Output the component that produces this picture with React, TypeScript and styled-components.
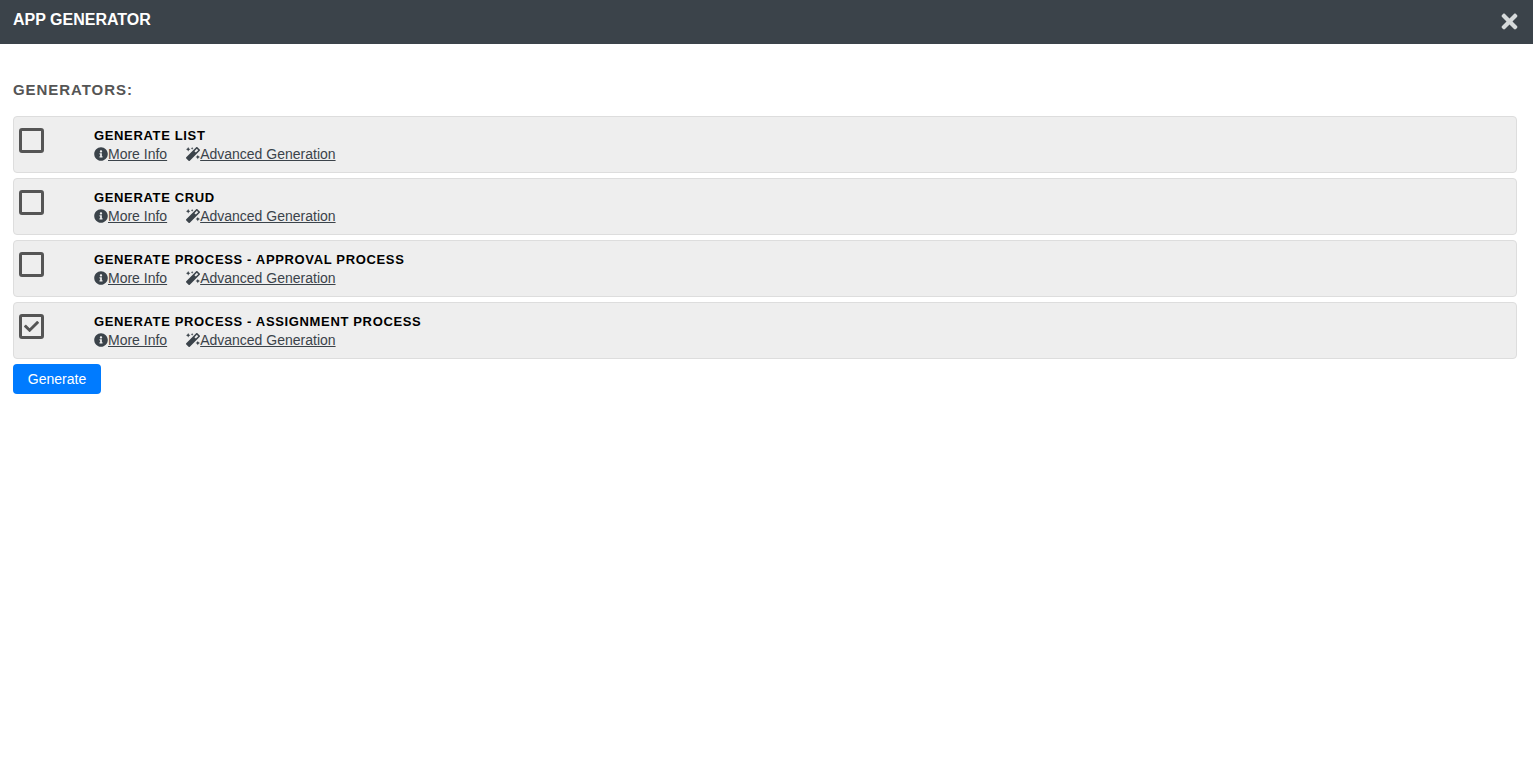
import React from 'react';
import styled, { createGlobalStyle } from 'styled-components';
import { FaCheck, FaInfoCircle, FaMagic, FaTimes } from 'react-icons/fa';

const GlobalStyle = createGlobalStyle`
  html, body {
    margin: 0;
    padding: 0;
    background: #fff;
    font-family: "Liberation Sans", Arial, sans-serif;
  }
`;

const Page = styled.div`
  min-height: 781px;
  display: flex;
  flex-direction: column;
`;

const Header = styled.header`
  height: 44px;
  background: #3b434a;
  display: flex;
  justify-content: space-between;
  padding: 0 12px 0 13px;
`;

const HeaderTitle = styled.div`
  color: #fff;
  font-size: 16px;
  font-weight: bold;
  line-height: 39px;
`;

const CloseBtn = styled.button`
  border: none;
  background: transparent;
  padding: 0;
  margin: 0;
  color: #d6dadb;
  font-size: 23px;
  display: flex;
  align-items: center;
  height: 43px;
  cursor: pointer;
`;

const Content = styled.main`
  padding: 37px 16px 0 13px;
`;

const SectionTitle = styled.h2`
  margin: 0 0 17px;
  color: #555;
  font-size: 15px;
  font-weight: bold;
  letter-spacing: 0.95px;
  line-height: 18px;
`;

const List = styled.div`
  display: flex;
  flex-direction: column;
  gap: 5px;
`;

const Row = styled.div`
  height: 57px;
  box-sizing: border-box;
  background: #eee;
  border: 1px solid #ddd;
  border-radius: 4px;
  display: flex;
  padding: 11px 5px 0;
`;

const CheckBox = styled.span`
  width: 25px;
  height: 25px;
  box-sizing: border-box;
  border: 3px solid #555;
  border-radius: 3px;
  color: #555;
  font-size: 15px;
  display: flex;
  align-items: center;
  justify-content: center;
  flex-shrink: 0;
`;

const RowBody = styled.div`
  margin-left: 50px;
  padding-top: 1px;
`;

const RowTitle = styled.div`
  color: #000;
  font-size: 13px;
  font-weight: bold;
  letter-spacing: 0.65px;
  line-height: 14px;
`;

const Links = styled.div`
  display: flex;
  gap: 19px;
  margin-top: 2px;
`;

const InfoLink = styled.a`
  display: flex;
  align-items: center;
  color: #3b434a;
  font-size: 14px;
  line-height: 18px;
  cursor: pointer;

  svg {
    font-size: 14px;
    flex-shrink: 0;
  }

  span {
    text-decoration: underline;
  }
`;

const GenerateBtn = styled.button`
  margin-top: 5px;
  width: 88px;
  height: 30px;
  border: none;
  border-radius: 4px;
  background: #007bff;
  color: #fff;
  font-family: inherit;
  font-size: 14px;
  padding: 0;
  cursor: pointer;
`;

const generators = [
  { title: 'GENERATE LIST', checked: false },
  { title: 'GENERATE CRUD', checked: false },
  { title: 'GENERATE PROCESS - APPROVAL PROCESS', checked: false },
  { title: 'GENERATE PROCESS - ASSIGNMENT PROCESS', checked: true },
];

const App = () => (
  <Page>
    <GlobalStyle />
    <Header>
      <HeaderTitle>APP GENERATOR</HeaderTitle>
      <CloseBtn>
        <FaTimes />
      </CloseBtn>
    </Header>
    <Content>
      <SectionTitle>GENERATORS:</SectionTitle>
      <List>
        {generators.map((g) => (
          <Row key={g.title}>
            <CheckBox>{g.checked && <FaCheck />}</CheckBox>
            <RowBody>
              <RowTitle>{g.title}</RowTitle>
              <Links>
                <InfoLink>
                  <FaInfoCircle />
                  <span>More Info</span>
                </InfoLink>
                <InfoLink>
                  <FaMagic />
                  <span>Advanced Generation</span>
                </InfoLink>
              </Links>
            </RowBody>
          </Row>
        ))}
      </List>
      <GenerateBtn>Generate</GenerateBtn>
    </Content>
  </Page>
);

export default App;
